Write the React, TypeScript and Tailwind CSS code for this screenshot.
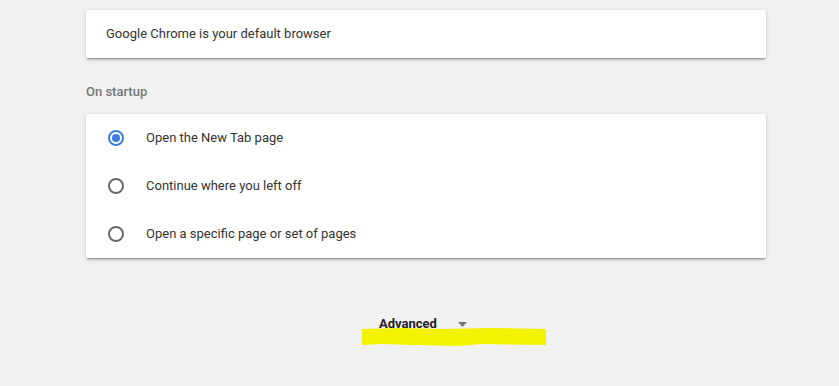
import React from "react";

const cardShadow =
  "shadow-[0_2px_2px_0_rgba(0,0,0,0.14),0_1px_5px_0_rgba(0,0,0,0.12),0_3px_1px_-2px_rgba(0,0,0,0.2)]";

const options = [
  "Open the New Tab page",
  "Continue where you left off",
  "Open a specific page or set of pages",
];

const Radio = ({ checked }: { checked: boolean }) => (
  <div
    className={`w-4 h-4 rounded-full border-2 flex items-center justify-center ${
      checked ? "border-[#3a7ee4]" : "border-[#6a6a6a]"
    }`}
  >
    {checked && <div className="w-2 h-2 rounded-full bg-[#3a7ee4]" />}
  </div>
);

export default function App() {
  return (
    <div
      className="w-[839px] h-[386px] bg-[#f1f1f1] text-[13px] text-[#333] overflow-hidden"
      style={{ fontFamily: "Roboto, 'Liberation Sans', sans-serif" }}
    >
      <div className="ml-[86px] w-[680px] pt-[10px]">
        {/* Default browser */}
        <div className={`h-[48px] bg-white rounded-[2px] flex items-center pl-[20px] ${cardShadow}`}>
          Google Chrome is your default browser
        </div>

        {/* On startup */}
        <div className="pt-[24px] pb-[12px] h-[56px] leading-[20px] font-medium text-[#757575]">
          On startup
        </div>
        <div className={`bg-white rounded-[2px] ${cardShadow}`}>
          {options.map((label, i) => (
            <div key={label} className="h-[48px] flex items-center pl-[22px]">
              <Radio checked={i === 0} />
              <span className="ml-[22px]">{label}</span>
            </div>
          ))}
        </div>

        {/* Advanced */}
        <div className="mt-[56px] ml-[293px] flex">
          <div className="relative flex items-center">
            <span className="font-bold text-[13px] text-[#222] leading-[20px]">Advanced</span>
            <svg width="9" height="5" viewBox="0 0 9 5" className="ml-[21px]">
              <path d="M0 0h9L4.5 5z" fill="#777" />
            </svg>
            <svg
              width="184"
              height="18"
              viewBox="0 0 184 18"
              className="absolute left-[-17px] top-[14px]"
            >
              <path
                d="M0 1L40 0L80 1L130 0L184 1L184 17L120 16L96 18L50 17L20 16L0 17Z"
                fill="#f3f300"
              />
            </svg>
          </div>
        </div>
      </div>
    </div>
  );
}
